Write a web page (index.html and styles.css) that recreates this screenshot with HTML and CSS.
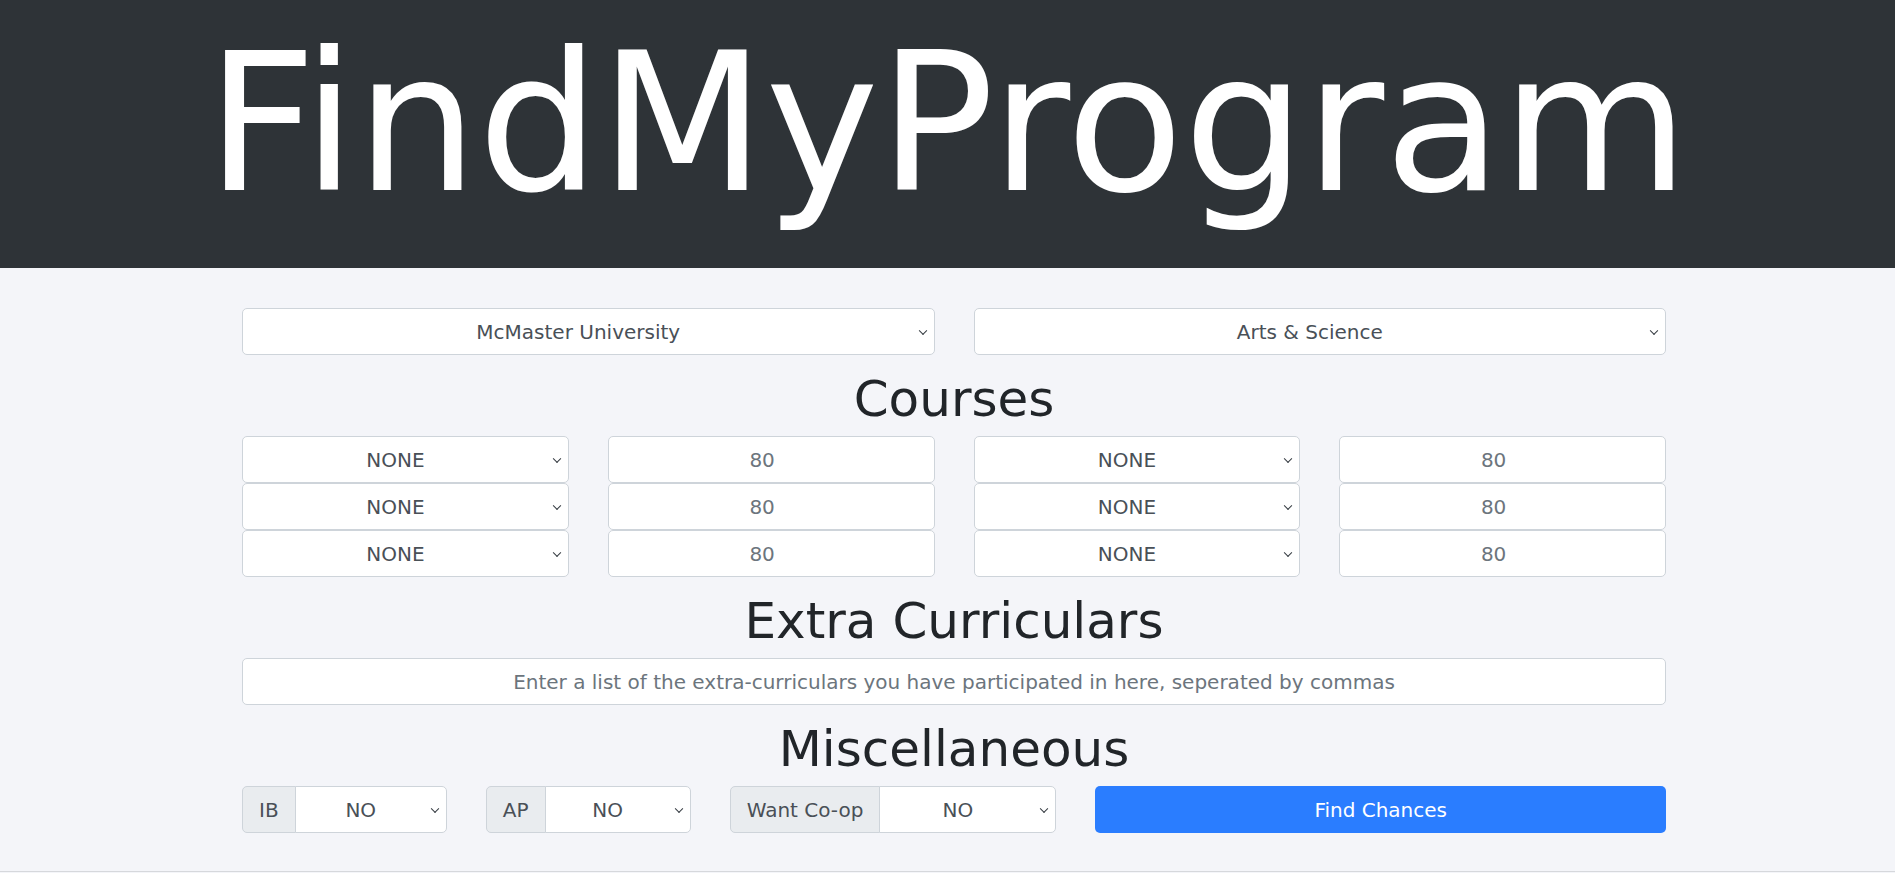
FILE: index.html
```html
<!DOCTYPE html>
<html>
  <head>
    <title>FindMyProgram</title>
    <meta name="viewport" content="width=device-width, initial-scale=1.0" />
    <link rel="stylesheet" href="styles.css">
  </head>
  <body>
    <header class="banner">
      <h1 class="brand">FindMyProgram</h1>
    </header>

    <main class="page">
      <div class="pair">
        <div class="pick">
          <select class="field">
            <option>McMaster University</option>
          </select>
        </div>
        <div class="pick">
          <select class="field">
            <option>Arts &amp; Science</option>
          </select>
        </div>
      </div>

      <h2 class="section-title">Courses</h2>
      <div class="courses">
        <div class="pick"><select class="field"><option>NONE</option></select></div>
        <input class="field grade" type="number" placeholder="80" />
        <div class="pick"><select class="field"><option>NONE</option></select></div>
        <input class="field grade" type="number" placeholder="80" />

        <div class="pick"><select class="field"><option>NONE</option></select></div>
        <input class="field grade" type="number" placeholder="80" />
        <div class="pick"><select class="field"><option>NONE</option></select></div>
        <input class="field grade" type="number" placeholder="80" />

        <div class="pick"><select class="field"><option>NONE</option></select></div>
        <input class="field grade" type="number" placeholder="80" />
        <div class="pick"><select class="field"><option>NONE</option></select></div>
        <input class="field grade" type="number" placeholder="80" />
      </div>

      <h2 class="section-title">Extra Curriculars</h2>
      <input class="field extras" type="text" placeholder="Enter a list of the extra-curriculars you have participated in here, seperated by commas" />

      <h2 class="section-title">Miscellaneous</h2>
      <div class="misc">
        <div class="exams">
          <div class="group">
            <span class="group-label">IB</span>
            <div class="pick"><select class="field"><option>NO</option><option>YES</option></select></div>
          </div>
          <div class="group">
            <span class="group-label">AP</span>
            <div class="pick"><select class="field"><option>NO</option><option>YES</option></select></div>
          </div>
        </div>
        <div class="group coop">
          <span class="group-label">Want Co-op</span>
          <div class="pick"><select class="field"><option>NO</option><option>YES</option></select></div>
        </div>
        <button class="submit">Find Chances</button>
      </div>
    </main>

    <footer class="foot"></footer>
  </body>
</html>
```

FILE: styles.css
```css
body {
  margin: 0;
  font-family: "DejaVu Sans", sans-serif;
  background: #f4f5f9;
  color: #212529;
}
.banner {
  height: 268px;
  box-sizing: border-box;
  padding-top: 9px;
  background: #2e3337;
  text-align: center;
}
.brand {
  margin: 0;
  font-size: 192px;
  font-weight: normal;
  line-height: 1.2;
  color: white;
}
.page {
  width: 1424px;
  margin: 40px auto 0;
  padding-left: 13px;
}
.pair {
  display: grid;
  grid-template-columns: 1fr 1fr;
  column-gap: 39px;
}
.section-title {
  margin: 14px 0 7px;
  font-size: 50px;
  font-weight: normal;
  line-height: 60px;
  text-align: center;
}
.field {
  display: block;
  width: 100%;
  height: 47px;
  box-sizing: border-box;
  margin: 0;
  padding: 0 16px;
  font-family: inherit;
  font-size: 20px;
  color: #495057;
  background: white;
  border: 1px solid #ced4da;
  border-radius: 5px;
  text-align: center;
  outline: none;
}
.field::placeholder {
  color: #6c757d;
}
select.field {
  appearance: none;
  -webkit-appearance: none;
  padding-right: 36px;
  text-align-last: center;
}
.grade {
  padding-right: 34px;
  -moz-appearance: textfield;
}
.grade::-webkit-inner-spin-button,
.grade::-webkit-outer-spin-button {
  -webkit-appearance: none;
  margin: 0;
}
.pick {
  position: relative;
  flex: 1;
  min-width: 0;
}
.pick::after {
  content: "";
  position: absolute;
  right: 9px;
  top: 50%;
  width: 5px;
  height: 5px;
  border-right: 1.6px solid #343a40;
  border-bottom: 1.6px solid #343a40;
  transform: translateY(-70%) rotate(45deg);
  pointer-events: none;
}
.courses {
  display: grid;
  grid-template-columns: repeat(4, 1fr);
  column-gap: 39px;
}
.misc {
  display: grid;
  grid-template-columns: repeat(12, 1fr);
  column-gap: 39px;
}
.exams {
  grid-column: span 4;
  display: grid;
  grid-template-columns: 1fr 1fr;
  column-gap: 39px;
}
.coop {
  grid-column: span 3;
}
.group {
  display: flex;
}
.group-label {
  display: flex;
  align-items: center;
  padding: 0 16px;
  font-size: 20px;
  color: #495057;
  white-space: nowrap;
  background: #e9ecef;
  border: 1px solid #ced4da;
  border-radius: 5px 0 0 5px;
}
.group .pick {
  margin-left: -1px;
}
.group .field {
  border-radius: 0 5px 5px 0;
}
.submit {
  grid-column: span 5;
  height: 47px;
  font-family: inherit;
  font-size: 20px;
  color: white;
  background: #2a7dff;
  border: none;
  border-radius: 5px;
  cursor: pointer;
}
.submit:hover {
  background: #1f6ee8;
}
.foot {
  margin-top: 38px;
  border-top: 1px solid #d6d8dc;
}
```
